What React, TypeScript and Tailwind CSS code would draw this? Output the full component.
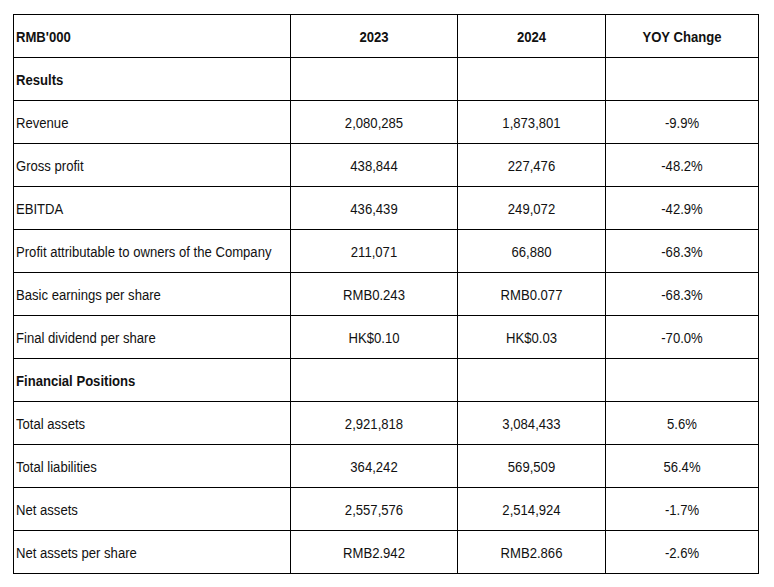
import React from "react";

type Row = { label: string; a?: string; b?: string; c?: string; bold?: boolean };

const rows: Row[] = [
  { label: "Results", bold: true },
  { label: "Revenue", a: "2,080,285", b: "1,873,801", c: "-9.9%" },
  { label: "Gross profit", a: "438,844", b: "227,476", c: "-48.2%" },
  { label: "EBITDA", a: "436,439", b: "249,072", c: "-42.9%" },
  { label: "Profit attributable to owners of the Company", a: "211,071", b: "66,880", c: "-68.3%" },
  { label: "Basic earnings per share", a: "RMB0.243", b: "RMB0.077", c: "-68.3%" },
  { label: "Final dividend per share", a: "HK$0.10", b: "HK$0.03", c: "-70.0%" },
  { label: "Financial Positions", bold: true },
  { label: "Total assets", a: "2,921,818", b: "3,084,433", c: "5.6%" },
  { label: "Total liabilities", a: "364,242", b: "569,509", c: "56.4%" },
  { label: "Net assets", a: "2,557,576", b: "2,514,924", c: "-1.7%" },
  { label: "Net assets per share", a: "RMB2.942", b: "RMB2.866", c: "-2.6%" },
];

const cell = "h-[43px] border-r border-b border-black flex items-center pt-[1px]";

function T({ children, bold }: { children?: React.ReactNode; bold?: boolean }) {
  return (
    <span className={`inline-block scale-y-[1.12] ${bold ? "font-bold" : ""}`}>{children}</span>
  );
}

export default function App() {
  return (
    <div className="w-[774px] h-[587px] bg-white pt-[14px] pl-[13px]" style={{ fontFamily: '"Liberation Sans", Arial, sans-serif' }}>
      <div className="grid grid-cols-[277px_167px_148px_153px] w-[746px] border-l border-t border-black text-[13.1px] text-[#111]">
        <div className={`${cell} pl-[2px]`}><T bold>RMB'000</T></div>
        <div className={`${cell} justify-center`}><T bold>2023</T></div>
        <div className={`${cell} justify-center`}><T bold>2024</T></div>
        <div className={`${cell} justify-center`}><T bold>YOY Change</T></div>
        {rows.map((r) => (
          <React.Fragment key={r.label}>
            <div className={`${cell} pl-[2px]`}><T bold={r.bold}>{r.label}</T></div>
            <div className={`${cell} justify-center`}><T>{r.a}</T></div>
            <div className={`${cell} justify-center`}><T>{r.b}</T></div>
            <div className={`${cell} justify-center`}><T>{r.c}</T></div>
          </React.Fragment>
        ))}
      </div>
    </div>
  );
}
